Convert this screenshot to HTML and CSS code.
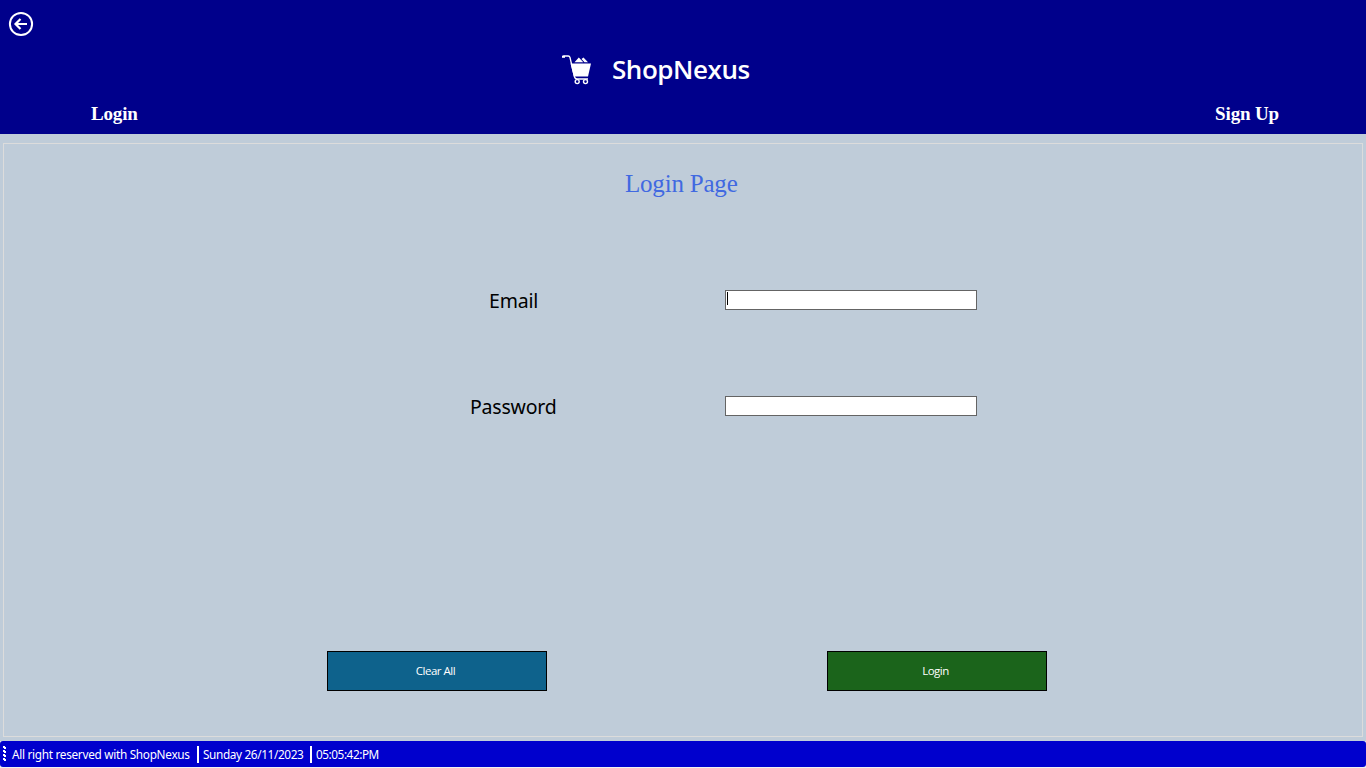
FILE: index.html
```html
<!DOCTYPE html>
<html lang="en">
<head>
<meta charset="utf-8">
<title>ShopNexus</title>
<link rel="stylesheet" href="styles.css">
</head>
<body>
<header class="header">
  <button class="back" type="button" aria-label="Back">
    <svg width="26" height="26" viewBox="0 0 26 26" fill="none" stroke="#fff" stroke-width="2"><circle cx="13" cy="13" r="11.1"/><path d="M19 13H8M12.5 8L7.5 13l5 5" stroke-width="2.2"/></svg>
  </button>
  <div class="brand">
    <svg class="cart" width="30" height="30" viewBox="0 0 30 30"><path d="M0.5 2Q0.5 .9 2 1H6.2Q7.6 1 8 2.5L12.4 21.5Q13 24 15 24H26" fill="none" stroke="#fff" stroke-width="1.3"/><path d="M0 .8h3v2H0z" fill="#fff"/><path d="M8.5 8.5H29L26 21.5H11.8z" fill="#fff"/><path d="M12.5 7.3L16.8 2.6l4.5 4.7zM19.5 4L21.5 2.6l4.5 4.7h-3.5z" fill="#fff"/><g fill="none" stroke="#fff" stroke-width="1.4"><circle cx="15.2" cy="26.6" r="2"/><circle cx="23.5" cy="26.6" r="2"/></g></svg>
    <span class="brand-name">ShopNexus</span>
  </div>
  <nav class="nav"><a class="nav-login">Login</a><a class="nav-signup">Sign Up</a></nav>
</header>
<main class="main">
  <form class="panel">
    <h1 class="title">Login Page</h1>
    <div class="fields">
      <label class="label label-email" for="email">Email</label>
      <div class="input input-focus"><span class="caret"></span><input id="email" type="text"></div>
      <label class="label label-password" for="password">Password</label>
      <div class="input"><input id="password" type="password"></div>
    </div>
    <div class="actions">
      <button class="btn btn-clear" type="button"><span>Clear All</span></button>
      <button class="btn btn-login" type="button"><span>Login</span></button>
    </div>
  </form>
</main>
<footer class="status">
  <svg class="grip" width="4" height="16" viewBox="0 0 4 16" fill="#fff"><path d="M0 0h2v2H0zM0 4h2v2H0zM0 8h2v2H0zM0 12h2v2H0z"/><path d="M1 1h2v2H1zM1 5h2v2H1zM1 9h2v2H1zM1 13h2v2H1z"/></svg>
  <span class="rights">All right reserved with ShopNexus</span>
  <i class="sep"></i>
  <span class="date">Sunday 26/11/2023</span>
  <i class="sep"></i>
  <span class="time">05:05:42:PM</span>
</footer>
</body>
</html>
```
FILE: styles.css
```css
* { box-sizing: border-box; }
body {
  margin: 0;
  width: 1366px;
  height: 768px;
  overflow: hidden;
  display: flex;
  flex-direction: column;
  background: #f0f0f0;
  font-family: "Noto Sans", "Open Sans", sans-serif;
}
.header { height: 134px; background: #00008b; color: #fff; display: flex; flex-direction: column; }
.back { margin: 11px 0 0 8px; padding: 0; border: 0; background: none; width: 26px; height: 26px; }
.back svg { display: block; }
.brand { display: flex; height: 34px; margin: 16px 0 0 562px; align-items: center; }
.cart { margin-right: 20px; }
.brand-name { padding-bottom: 2px; font: 600 26px/34px "Trebuchet MS", "Open Sans", sans-serif; letter-spacing: -0.45px; white-space: nowrap; }
.nav { display: flex; justify-content: space-between; margin-top: 16px; padding: 0 87px 0 91px; font: bold 19px/22px "Liberation Serif", serif; letter-spacing: -0.15px; }
.main { height: 607px; padding: 9px 3px 4px; background: #bfccd9; }
.panel { height: 594px; border: 1px solid #dcdcdc; }
.title { margin: 25px 0 0 621px; font: 400 25px/30px "Liberation Serif", serif; letter-spacing: -0.2px; color: #4169e1; white-space: nowrap; }
.fields { display: grid; grid-template-columns: 255px 252px; grid-template-rows: 20px 20px; row-gap: 86px; margin: 91px 0 0 466px; }
.label { font-size: 19.5px; line-height: 22px; color: #000; white-space: nowrap; }
.label-email { padding-left: 19px; letter-spacing: -0.2px; }
.label-password { letter-spacing: -0.2px; }
.input { height: 20px; border: 1px solid #646464; background: #fff; display: flex; padding: 1px; }
.input input { flex: 1; min-width: 0; border: 0; padding: 0; outline: 0; }
.caret { width: 1px; height: 13px; background: #000; }
.actions { display: flex; gap: 280px; margin: 235px 0 0 323px; }
.btn { width: 220px; height: 40px; border: 1px solid #000; padding: 0 3px 0 0; color: #fff; font: 11.5px/18px "Open Sans", sans-serif; letter-spacing: -0.5px; }
.btn-clear { background: #0e628c; }
.btn-login { background: #1b641b; }
.status { height: 26px; border-radius: 3px; background: #0000cd; color: #fff; display: flex; align-items: center; font-size: 11.8px; line-height: 16px; white-space: nowrap; }
.rights, .date, .time { padding-bottom: 1px; }
.grip { margin: 0 5px 0 3px; }
.rights { width: 185px; letter-spacing: -0.3px; }
.sep { width: 2px; height: 17px; background: #fff; }
.date { width: 111px; padding-left: 4px; letter-spacing: -0.37px; }
.time { padding-left: 4px; letter-spacing: -0.45px; }
```
